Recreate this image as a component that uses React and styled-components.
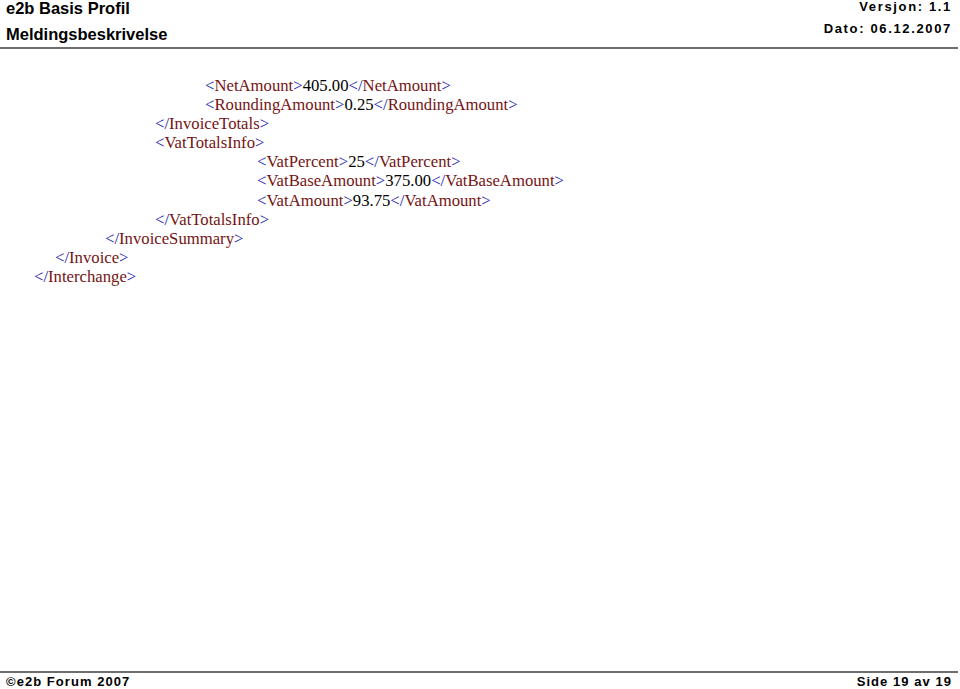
import styled, { createGlobalStyle } from "styled-components";

const GlobalStyle = createGlobalStyle`
  html, body {
    margin: 0;
    padding: 0;
    background: #ffffff;
  }
`;

const Page = styled.div`
  display: flex;
  flex-direction: column;
  width: 960px;
  height: 689px;
  background: #ffffff;
  overflow: hidden;
`;

const Header = styled.header`
  display: flex;
  justify-content: space-between;
  padding: 0 6px 0 6px;
  height: 47px;
  border-bottom: 2px solid #6e6e6e;
  margin-right: 2px;
`;

const TitleBlock = styled.div`
  display: flex;
  flex-direction: column;
  gap: 10px;
  font-family: "Liberation Sans", Arial, sans-serif;
  font-weight: bold;
  font-size: 16.5px;
  color: #000;
  line-height: 16px;
`;

const MetaBlock = styled.div`
  display: flex;
  flex-direction: column;
  align-items: flex-end;
  gap: 9px;
  font-family: "Liberation Sans", Arial, sans-serif;
  font-weight: bold;
  font-size: 13px;
  letter-spacing: 1.65px;
  color: #000;
  line-height: 13px;
`;

const Body = styled.main`
  flex: 1;
  padding-top: 27px;
  font-family: "Liberation Serif", "Times New Roman", serif;
  font-size: 16.7px;
`;

const Line = styled.div`
  padding-left: ${(p) => p.$indent}px;
  height: 19.1px;
  line-height: 19px;
  white-space: pre;
  color: #000;
`;

const Bracket = styled.span`
  color: #2222b0;
`;

const Name = styled.span`
  color: #761414;
`;

const Footer = styled.footer`
  display: flex;
  justify-content: space-between;
  padding: 2px 6px 0 6px;
  height: 14px;
  border-top: 2px solid #6e6e6e;
  margin-right: 2px;
  font-family: "Liberation Sans", Arial, sans-serif;
  font-weight: bold;
  font-size: 13px;
  letter-spacing: 1.05px;
  line-height: 13px;
  color: #000;
`;

const Tag = ({ name, close }) => (
  <>
    <Bracket>{close ? "</" : "<"}</Bracket>
    <Name>{name}</Name>
    <Bracket>&gt;</Bracket>
  </>
);

const lines = [
  { indent: 205, name: "NetAmount", value: "405.00" },
  { indent: 205, name: "RoundingAmount", value: "0.25" },
  { indent: 155, name: "InvoiceTotals", close: true },
  { indent: 155, name: "VatTotalsInfo" },
  { indent: 257, name: "VatPercent", value: "25" },
  { indent: 257, name: "VatBaseAmount", value: "375.00" },
  { indent: 257, name: "VatAmount", value: "93.75" },
  { indent: 155, name: "VatTotalsInfo", close: true },
  { indent: 105, name: "InvoiceSummary", close: true },
  { indent: 55, name: "Invoice", close: true },
  { indent: 34, name: "Interchange", close: true },
];

export default function App() {
  return (
    <Page>
      <GlobalStyle />
      <Header>
        <TitleBlock>
          <span>e2b Basis Profil</span>
          <span>Meldingsbeskrivelse</span>
        </TitleBlock>
        <MetaBlock>
          <span>Versjon: 1.1</span>
          <span>Dato: 06.12.2007</span>
        </MetaBlock>
      </Header>
      <Body>
        {lines.map((l, i) => (
          <Line key={i} $indent={l.indent}>
            {l.value !== undefined ? (
              <>
                <Tag name={l.name} />
                {l.value}
                <Tag name={l.name} close />
              </>
            ) : (
              <Tag name={l.name} close={l.close} />
            )}
          </Line>
        ))}
      </Body>
      <Footer>
        <span>©e2b Forum 2007</span>
        <span>Side 19 av 19</span>
      </Footer>
    </Page>
  );
}
